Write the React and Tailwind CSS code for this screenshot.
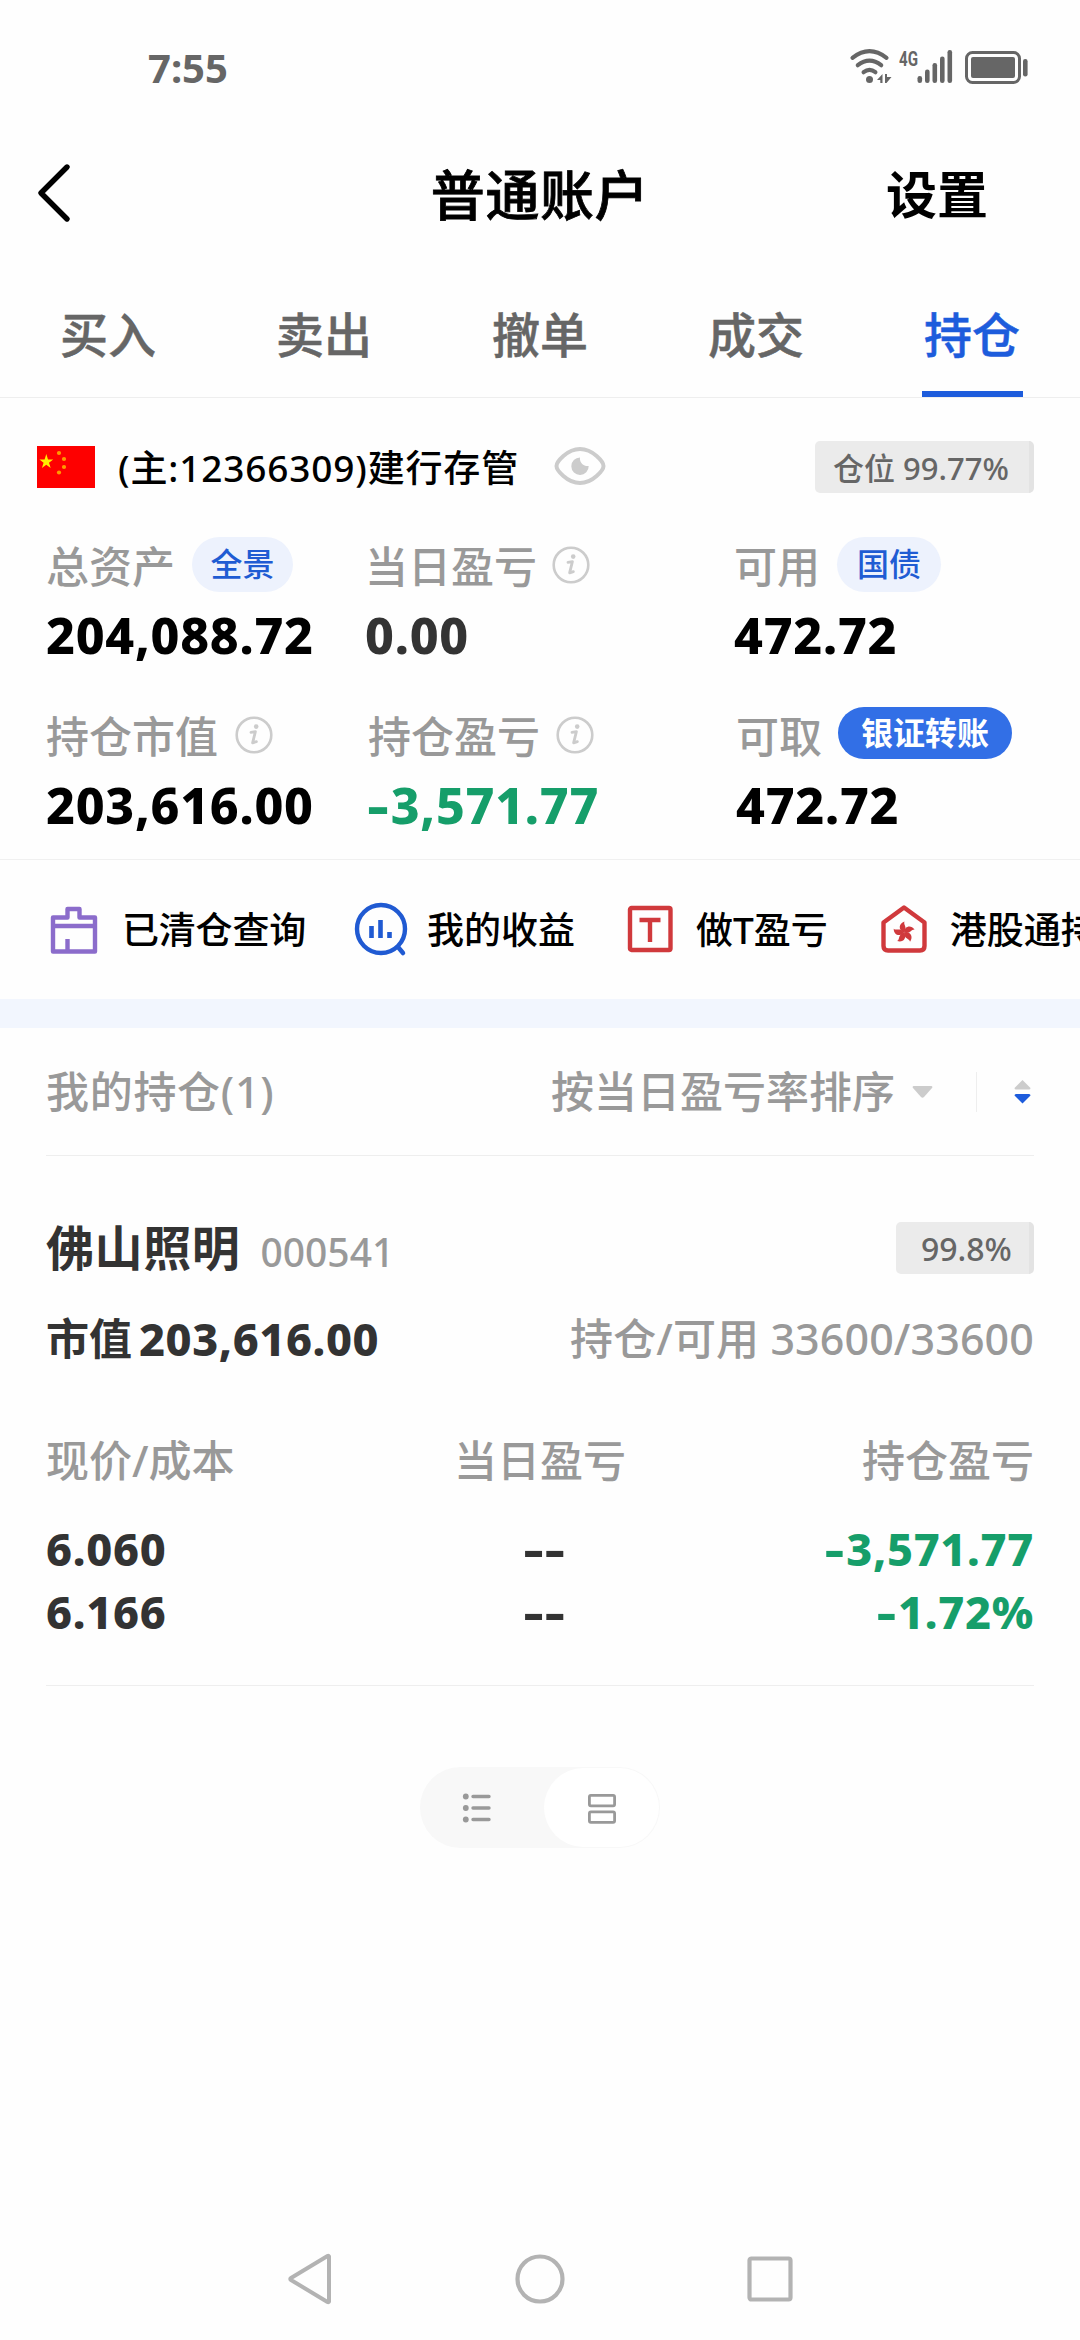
import React from 'react';

const tabs = ['买入', '卖出', '撤单', '成交', '持仓'];

const InfoIcon = ({ className }) => (
  <svg className={`w-[38px] h-[38px] shrink-0 ${className}`} viewBox="0 0 38 38" fill="none">
    <circle cx="19" cy="19" r="17.3" stroke="#cccccc" strokeWidth="2.6" />
    <circle cx="21.2" cy="10.6" r="2.3" fill="#cccccc" />
    <path d="M16 16.4 L20.4 15.6 L17.6 26.8 L21.4 25.6" stroke="#cccccc" strokeWidth="2.8" strokeLinecap="round" strokeLinejoin="round" />
  </svg>
);

const StatusBar = () => (
  <div className="flex h-[136px] items-center pl-[148px] pr-[52px]">
    <span className="text-[40px] leading-none font-bold text-[#666666]">7:55</span>
    <svg className="ml-auto -mt-[2px] h-[40px] w-[180px] overflow-visible" viewBox="0 -2 180 40">
      <g fill="none" stroke="#666666" strokeWidth="4.2" strokeLinecap="round">
        <path d="M4.500 8.800 Q21.500 -4.500 38.500 8.800" />
        <path d="M9.800 16.200 Q21.500 7 33.200 16.200" />
        <path d="M15.600 23.200 Q21.500 18.600 27.400 23.200" />
      </g>
      <circle cx="21.500" cy="30.500" r="3.500" fill="#666666" />
      <path d="M29 31 L34.500 25 V34 H32.300 V31 Z M37 25 H39 V28 H43.500 L38.500 34 H37 Z" fill="#666666" />
      <text x="51" y="16.500" fontSize="21" fontWeight="700" fontFamily="Roboto, sans-serif" fill="#666666" textLength="19" lengthAdjust="spacingAndGlyphs">4G</text>
      <g fill="#666666">
        <rect x="69.500" y="27" width="4.600" height="7" rx="2.200" />
        <rect x="77" y="20.500" width="4.600" height="13.500" rx="2.200" />
        <rect x="84.500" y="14" width="4.600" height="20" rx="2.200" />
        <rect x="92" y="7.500" width="4.600" height="26.500" rx="2.200" />
        <rect x="99.500" y="1" width="4.600" height="33" rx="2.200" />
        <rect x="123" y="8" width="44" height="21" rx="2" />
        <rect x="175" y="10" width="4.600" height="17.500" rx="2.200" />
      </g>
      <rect x="118.500" y="3.500" width="53" height="30" rx="6" fill="none" stroke="#666666" strokeWidth="3" />
    </svg>
  </div>
);

const Header = () => (
  <header className="grid h-[118px] grid-cols-3 items-center text-black">
    <svg className="ml-[36px] -mt-[4px] h-[62px] w-[36px]" viewBox="0 0 36 62" fill="none">
      <path d="M31 5 L5 31 L31 57" stroke="black" strokeWidth="5.400" strokeLinecap="round" strokeLinejoin="round" />
    </svg>
    <h1 className="text-center text-[54px] leading-none font-medium tracking-[0.6px] whitespace-nowrap [-webkit-text-stroke:0.8px_black]">普通账户</h1>
    <span className="mr-[92px] pb-[2px] text-right text-[51px] leading-none font-bold">设置</span>
  </header>
);

const Tabs = () => (
  <nav className="grid h-[144px] grid-cols-5 border-b border-[#eeeeee]">
    {tabs.map((tab) => {
      const active = tab === '持仓';
      return (
        <div key={tab} className="flex flex-col items-center">
          <span className={`flex h-[137px] items-center pt-[24px] text-[48px] leading-none font-medium [-webkit-text-stroke:0.5px] ${active ? 'text-[#1d5cdc]' : 'text-[#666666]'}`}>
            {tab}
          </span>
          {active && <div className="h-[6px] w-[101px] bg-[#1d5cdc]"></div>}
        </div>
      );
    })}
  </nav>
);

const Account = () => (
  <div className="flex h-[140px] items-center pl-[37px] pr-[46px]">
    <svg className="-mt-[2px] h-[42px] w-[58px]" viewBox="0 0 58 42">
      <rect width="58" height="42" fill="#fe0000" />
      <path d="M9.300 8 L11 13.500 H16.200 L12 16.700 L13.700 22 L9.300 18.800 L4.900 22 L6.600 16.700 L2.400 13.500 H7.600 Z" fill="#ffee00" />
      <g fill="#ff9a00">
        <circle cx="22" cy="7" r="2.100" />
        <circle cx="27" cy="13" r="2.100" />
        <circle cx="27" cy="21" r="2.100" />
        <circle cx="22" cy="26.500" r="2.100" />
      </g>
    </svg>
    <span className="ml-[23px] pb-px text-[37px] leading-none font-medium tracking-[0.85px] whitespace-nowrap text-black">(主:12366309)建行存管</span>
    <svg className="ml-[35px] -mt-[4px] h-[40px] w-[52px]" viewBox="0 0 52 40" fill="none">
      <path d="M2.500 20 C2.500 16 13 3 26 3 C39 3 49.500 16 49.500 20 C49.500 24 39 37 26 37 C13 37 2.500 24 2.500 20 Z" stroke="#cccccc" strokeWidth="4" />
      <path d="M26 11.500 A8.700 8.700 0 1 0 34.700 20 A7.500 7.500 0 0 1 26 11.500 Z" fill="#cccccc" />
    </svg>
    <div className="ml-auto -mt-[2px] flex h-[52px] w-[219px] items-center rounded-[5px] border-r-[5px] border-[#e3e3e3] bg-[#ebebeb] pt-[2px] pl-[18px] text-[31px] leading-none font-medium whitespace-nowrap text-[#666666]">
      仓位 99.77%
    </div>
  </div>
);

// wide minus sign in front of losses
const Minus = () => <span className="mr-[1px] ml-[5px] inline-block origin-right scale-x-[1.35]">-</span>;

const Cell = ({ label, value, valueClass = 'text-black', children, className = '' }) => (
  <div className={className}>
    <div className="flex h-[56px] items-center text-[43px] leading-none font-medium whitespace-nowrap text-[#999999]">
      <span>{label}</span>
      {children}
    </div>
    <div className={`flex h-[84px] items-center pb-[3px] text-[50px] leading-none font-extrabold tracking-[0.75px] whitespace-nowrap ${valueClass}`}>{value}</div>
  </div>
);

const pill = 'flex items-center justify-center rounded-full text-[32px] leading-none';

const Assets = () => (
  <section className="grid grid-cols-[319px_369px_1fr] gap-y-[30px] border-b border-[#f0f0f0] pb-[11px] pl-[46px]">
    <Cell label="总资产" value="204,088.72">
      <span className={`${pill} ml-[17px] -mt-[4px] h-[55px] w-[101px] bg-[#edf2fd] font-medium text-[#1f5cd3]`}>全景</span>
    </Cell>
    <Cell label="当日盈亏" value="0.00" valueClass="text-[#333333]">
      <InfoIcon className="-mt-[2px] ml-[15px]" />
    </Cell>
    <Cell label="可用" value="472.72">
      <span className={`${pill} ml-[17px] -mt-[4px] h-[55px] w-[104px] bg-[#edf2fd] font-medium text-[#1f5cd3]`}>国债</span>
    </Cell>
    <Cell label="持仓市值" value="203,616.00">
      <InfoIcon className="-mt-[2px] ml-[17px]" />
    </Cell>
    <Cell label="持仓盈亏" value={<><Minus />3,571.77</>} valueClass="text-[#169e6a]" className="pl-[3px]">
      <InfoIcon className="-mt-[2px] ml-[16px]" />
    </Cell>
    <Cell label="可取" value="472.72" className="pl-[2px]">
      <span className={`${pill} ml-[16px] -mt-[7px] h-[52px] w-[174px] bg-[#326fe6] font-bold text-white`}>银证转账</span>
    </Cell>
  </section>
);

const Shortcuts = () => (
  <section className="flex h-[139px] items-center overflow-hidden text-[37px] leading-none font-medium whitespace-nowrap text-black">
    <svg className="ml-[50px] h-[50px] w-[48px] shrink-0" viewBox="0 0 48 50" fill="none" stroke="#8b6ccb" strokeWidth="4.400" strokeLinejoin="round">
      <path d="M3 12.500 H17.500 V4 H29.500 V12.500 H45 V46.500 H3 Z" />
      <path d="M3 21 H45 M17.500 46 V34" />
    </svg>
    <span className="ml-[24px] tracking-[-0.2px]">已清仓查询</span>
    <svg className="ml-[47px] -mt-[2px] h-[56px] w-[56px] shrink-0" viewBox="0 0 56 56" fill="none" stroke="#205ad2" strokeWidth="4.400">
      <circle cx="28" cy="28" r="24" />
      <path d="M45 46 L50 52" strokeWidth="4.500" strokeLinecap="round" />
      <path d="M18.500 25 V37 M27.500 19 V37 M36.500 31 V37" strokeWidth="4.600" />
    </svg>
    <span className="ml-[18px]">我的收益</span>
    <svg className="ml-[52px] -mt-[2px] h-[48px] w-[46px] shrink-0" viewBox="0 0 46 48" fill="none" stroke="#d0393c" strokeWidth="4.400">
      <rect x="3" y="3" width="40.500" height="42" rx="1.500" />
      <path d="M12.500 15 H33.500 M23 15 V37" />
    </svg>
    <span className="ml-[23px]">做T盈亏</span>
    <svg className="ml-[52px] -mt-[2px] h-[50px] w-[48px] shrink-0" viewBox="0 0 48 50" stroke="#d0393c" strokeWidth="4.400" strokeLinejoin="round" fill="none">
      <path d="M24 3.500 L44.500 18.500 V42 Q44.500 46.500 40 46.500 H8 Q3.500 46.500 3.500 42 V18.500 Z" />
      <g fill="#d0393c" stroke="none">
        {[0, 72, 144, 216, 288].map((deg) => (
          <path key={deg} d="M24 28.500 C18 26 18.500 19.500 24.500 17.500 C23 21 28 23 24 28.500 Z" transform={`rotate(${deg} 24 28.500)`} />
        ))}
      </g>
    </svg>
    <span className="ml-[22px]">港股通持仓</span>
  </section>
);

const ListHeader = () => (
  <div className="mx-[46px] flex h-[128px] items-center border-b border-[#eeeeee] text-[43px] leading-none font-medium whitespace-nowrap text-[#999999]">
    <span className="tracking-[0.7px]">我的持仓(1)</span>
    <span className="ml-auto">按当日盈亏率排序</span>
    <svg className="ml-[17px] h-[12px] w-[21px]" viewBox="0 0 21 12">
      <path d="M1.500 0 H19.500 Q21 0.500 20 2 L12 11 Q10.500 12.500 9 11 L1 2 Q0 0.500 1.500 0 Z" fill="#cccccc" />
    </svg>
    <div className="ml-[43px] h-[40px] w-px bg-[#eeeeee]"></div>
    <svg className="ml-[37px] mr-[3px] h-[24px] w-[17px]" viewBox="0 0 17 24">
      <path d="M8.500 0 L16.500 8 Q16.500 9.500 15 9.500 H2 Q0.500 9.500 0.500 8 Z" fill="#cccccc" />
      <path d="M8.500 23.500 L16.500 15.500 Q16.500 14 15 14 H2 Q0.500 14 0.500 15.500 Z" fill="#1d5cdc" />
    </svg>
  </div>
);

const Holding = () => (
  <section className="mx-[46px] h-[530px] border-b border-[#eeeeee] text-[#333333]">
    <div className="flex items-center pt-[66px]">
      <span className="text-[48px] leading-none font-bold tracking-[0.6px]">佛山照明</span>
      <span className="ml-[20px] pt-[6px] text-[39px] leading-none font-medium text-[#999999]">000541</span>
      <div className="ml-auto flex h-[52px] w-[138px] items-center rounded-[5px] border-r-[5px] border-[#e3e3e3] bg-[#ebebeb] pt-[2px] pl-[25px] text-[32px] leading-none font-medium text-[#666666]">
        99.8%
      </div>
    </div>
    <div className="mt-[42px] flex h-[44px] items-center justify-between leading-none whitespace-nowrap">
      <div className="flex items-center font-bold">
        <span className="text-[43px]">市值</span>
        <span className="ml-[7px] text-[45px] font-extrabold tracking-[0.6px]">203,616.00</span>
      </div>
      <span className="text-[43px] font-medium tracking-[0.1px] text-[#999999]">持仓/可用 33600/33600</span>
    </div>
    <div className="mt-[78px] grid h-[44px] grid-cols-3 items-center text-[43px] leading-none font-medium whitespace-nowrap text-[#999999]">
      <span>现价/成本</span>
      <span className="text-center">当日盈亏</span>
      <span className="text-right">持仓盈亏</span>
    </div>
    <div className="mt-[35px] grid grid-cols-3 text-[45px] leading-[63px] font-extrabold tracking-[0.7px]">
      <span>6.060</span>
      <span className="ml-[10px] scale-x-[1.4] text-center">--</span>
      <span className="text-right text-[#169e6a]"><Minus />3,571.77</span>
      <span>6.166</span>
      <span className="ml-[10px] scale-x-[1.4] text-center">--</span>
      <span className="text-right text-[#169e6a]"><Minus />1.72%</span>
    </div>
  </section>
);

const ViewToggle = () => (
  <div className="mx-auto mt-[81px] flex h-[81px] w-[240px] items-center justify-between rounded-full bg-[#f8f8f8] p-px">
    <svg className="ml-[41px] h-[32px] w-[30px]" viewBox="0 0 30 32" fill="#999999">
      <circle cx="3.800" cy="4.500" r="2.900" />
      <circle cx="3.800" cy="16" r="2.900" />
      <circle cx="3.800" cy="27.500" r="2.900" />
      <path d="M11 4.500 H27 M11 16 H27 M11 27.500 H27" stroke="#999999" strokeWidth="3.400" strokeLinecap="round" />
    </svg>
    <div className="flex h-[79px] w-[115px] items-center justify-center rounded-full bg-white">
      <svg className="h-[32px] w-[30px]" viewBox="0 0 30 32" fill="none" stroke="#999999" strokeWidth="2.800">
        <rect x="2.400" y="3.400" width="25.200" height="10.400" rx="1.500" />
        <rect x="2.400" y="19.900" width="25.200" height="10.400" rx="1.500" />
      </svg>
    </div>
  </div>
);

const NavBar = () => (
  <div className="mt-auto flex h-[122px] items-center justify-center gap-[178px] text-[#b3b3b3]">
    <svg className="h-[54px] w-[50px]" viewBox="0 0 50 54" fill="none" stroke="currentColor" strokeWidth="4" strokeLinejoin="round">
      <path d="M44 4.500 V49.500 Q43.500 50.500 42.500 50 L6 28 Q4.500 27 6 26 L42.500 4 Q43.500 3.500 44 4.500 Z" />
    </svg>
    <svg className="h-[54px] w-[54px]" viewBox="0 0 54 54" fill="none" stroke="currentColor" strokeWidth="4.200">
      <circle cx="27" cy="27" r="22.500" />
    </svg>
    <svg className="h-[54px] w-[50px]" viewBox="0 0 50 54" fill="none" stroke="currentColor" strokeWidth="4.200">
      <rect x="4.500" y="6.500" width="41" height="41" rx="2" />
    </svg>
  </div>
);

export default function App() {
  return (
    <div className="flex h-[2340px] w-[1080px] flex-col overflow-hidden bg-[#fefefe] font-['Noto_Sans','Noto_Sans_CJK_SC',sans-serif]">
      <StatusBar />
      <Header />
      <Tabs />
      <Account />
      <Assets />
      <Shortcuts />
      <div className="h-[29px] bg-[#f2f6fe]"></div>
      <ListHeader />
      <Holding />
      <ViewToggle />
      <NavBar />
    </div>
  );
}
